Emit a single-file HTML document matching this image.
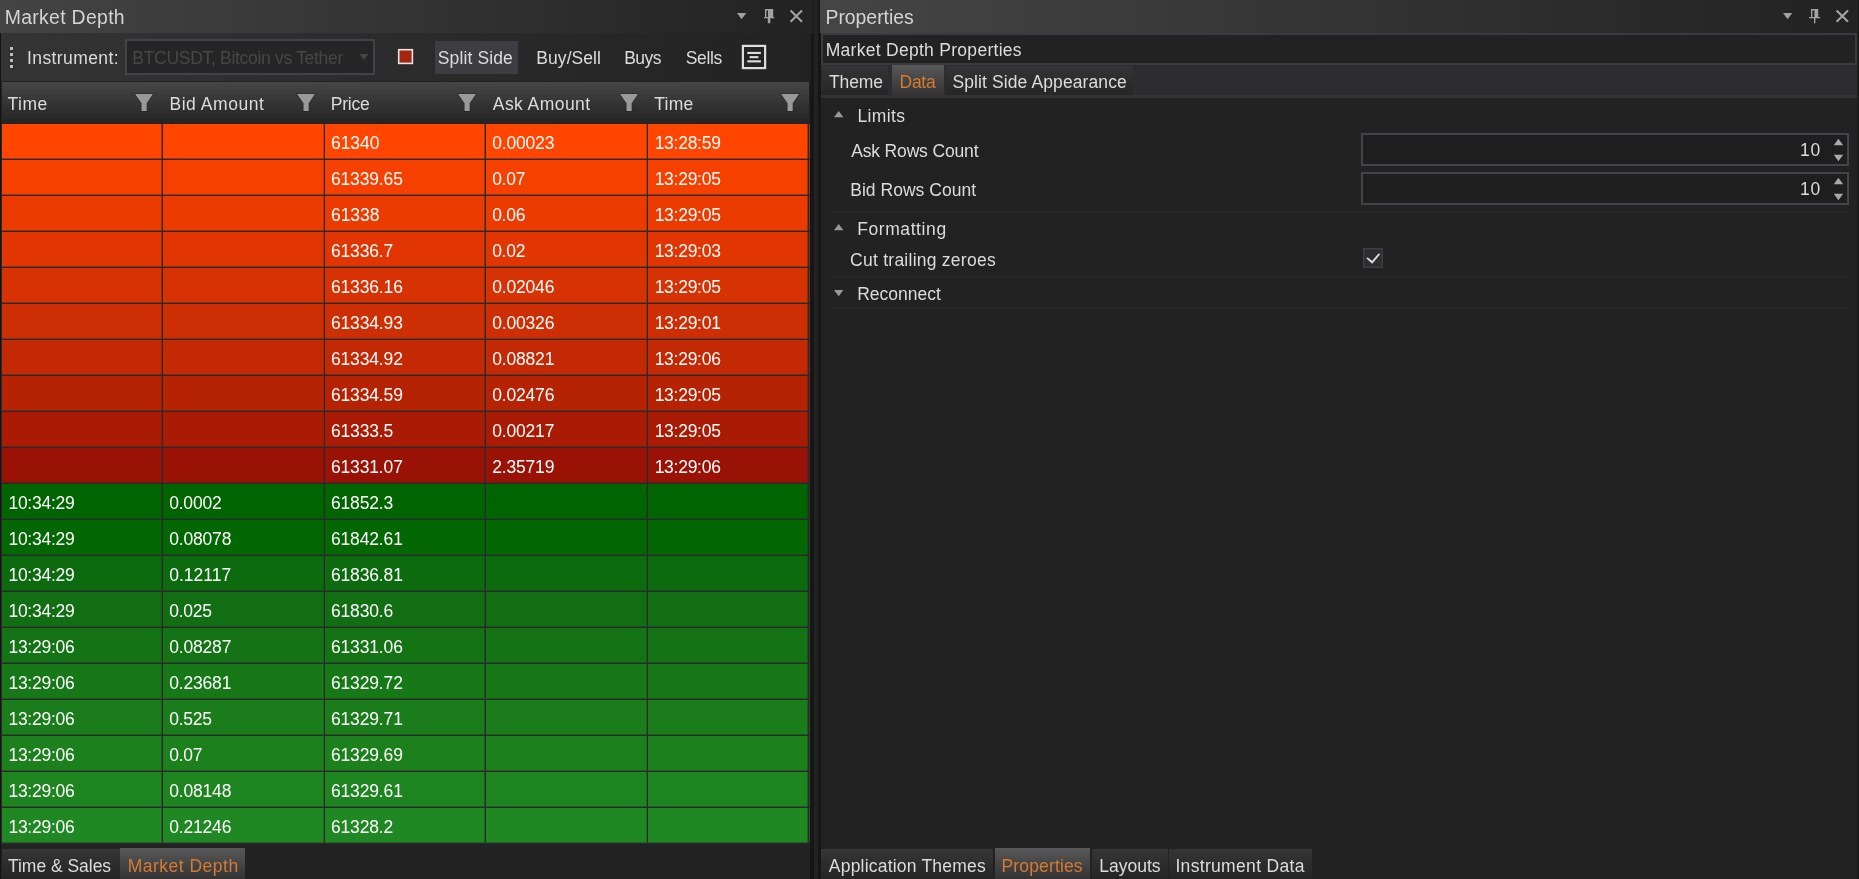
<!DOCTYPE html>
<html lang="en">
<head>
<meta charset="utf-8">
<title>Market Depth</title>
<style>
html,body{margin:0;padding:0;background:#222;}
body{width:1859px;height:879px;position:relative;overflow:hidden;font-family:"Liberation Sans",sans-serif;}
div,span,svg{position:absolute;box-sizing:border-box;}
.t{white-space:pre;line-height:1;font-size:17.5px;color:#dcdcdc;}
.c{color:#fff;}
/* left panel */
#ltitle{left:0;top:0;width:813px;height:33px;background:linear-gradient(90deg,#444 0%,#222 100%);}
#ltool{left:0;top:33px;width:812px;height:49px;background:linear-gradient(90deg,#343434 0%,#222 100%);}
#lborder{left:0;top:33px;width:1px;height:846px;background:#131313;}
#lhead{left:2px;top:82px;width:807px;height:42px;background:linear-gradient(180deg,#464646 0%,#363636 45%,#232323 100%);}
#lheadline{left:2px;top:81px;width:810px;height:1px;background:#222;}
#grid{left:1px;top:124px;width:809px;height:720px;background:#2a2a2a;}
.row{left:2px;width:808px;height:36px;
 background-image:
  linear-gradient(90deg,transparent 159px,rgba(42,42,42,.45) 159px,rgba(42,42,42,.45) 160px,#2a2a2a 160px,#2a2a2a 161px,transparent 161px,
   transparent 321px,rgba(42,42,42,.3) 321px,rgba(42,42,42,.3) 322px,#2a2a2a 322px,#2a2a2a 323px,transparent 323px,
   transparent 482px,rgba(42,42,42,.45) 482px,rgba(42,42,42,.45) 483px,#2a2a2a 483px,#2a2a2a 484px,transparent 484px,
   transparent 644px,rgba(42,42,42,.3) 644px,rgba(42,42,42,.3) 645px,#2a2a2a 645px,#2a2a2a 646px,transparent 646px,
   transparent 805px,rgba(42,42,42,.45) 805px,rgba(42,42,42,.45) 806px,#2a2a2a 806px,#2a2a2a 807px,rgba(42,42,42,.55) 807px),
  linear-gradient(180deg,transparent 34px,rgba(42,42,42,.45) 34px,rgba(42,42,42,.45) 35px,#2a2a2a 35px);}
#lbelow{left:1px;top:844px;width:810px;height:4px;background:#222;}
#lscroll{left:810px;top:82px;width:2px;height:766px;background:#1a1a1a;}
#ltabs{left:2px;top:848px;width:810px;height:31px;background:#222;}
.tab{background:linear-gradient(180deg,#363636,#242424);}
.tab2{background:linear-gradient(180deg,#343434,#262626);}
.tabsel{background:linear-gradient(180deg,#585858,#333);}
/* splitter */
#sp1{left:810px;top:82px;width:4px;height:797px;background:#161616;}
#sp1a{left:811px;top:33px;width:3px;height:49px;background:#161616;}
#sp1t{left:813px;top:0;width:1px;height:33px;background:#1c1c1c;}
#sp2{left:814px;top:0;width:4px;height:879px;background:#222;}
#sp3{left:818px;top:0;width:2px;height:33px;background:#191919;}
#sp3b{left:818px;top:33px;width:3px;height:846px;background:#161616;}
/* right panel */
#rtitle{left:820px;top:0;width:1038px;height:33px;background:linear-gradient(90deg,#454545 0%,#222 100%);}
#redge{left:1857px;top:33px;width:2px;height:846px;background:#1c1c1c;}
#redge2{left:1858px;top:0;width:1px;height:33px;background:#1c1c1c;}
#rbox{left:821px;top:33px;width:1036px;height:32px;border:2px solid #3a3a40;background:#222;}
#rstrip{left:821px;top:65px;width:1036px;height:33px;background:linear-gradient(180deg,#2d2d30 30px,#333336 30px);}
.sep{left:829px;width:1021px;height:2px;background:#262626;}
.spin{left:1361px;width:488px;height:33px;border:2px solid #434349;background:#1e1e1e;}
#chk{left:1363px;top:248px;width:20px;height:20px;border:1px solid #3d3d43;background:#2d2d30;box-shadow:inset 0 0 0 1px rgba(61,61,67,.5);}
.btn{background:#3e3e42;}
</style>
</head>
<body>
<!-- ===== left panel ===== -->
<div id="ltitle"></div>
<div id="ltool"></div>
<div id="lheadline"></div>
<div id="lhead"></div>
<div id="grid"></div>
<div class="row" style="top:124px;background-color:#ff4500"></div>
<div class="row" style="top:160px;background-color:#f54000"></div>
<div class="row" style="top:196px;background-color:#eb3b01"></div>
<div class="row" style="top:232px;background-color:#e13602"></div>
<div class="row" style="top:268px;background-color:#d73203"></div>
<div class="row" style="top:304px;background-color:#cd2e03"></div>
<div class="row" style="top:340px;background-color:#c22904"></div>
<div class="row" style="top:376px;background-color:#b62304"></div>
<div class="row" style="top:412px;background-color:#a91b04"></div>
<div class="row" style="top:448px;background-color:#9a1105"></div>
<div class="row" style="top:484px;background-color:#006400"></div>
<div class="row" style="top:520px;background-color:#036704"></div>
<div class="row" style="top:556px;background-color:#0d6b0f"></div>
<div class="row" style="top:592px;background-color:#116e13"></div>
<div class="row" style="top:628px;background-color:#137315"></div>
<div class="row" style="top:664px;background-color:#177818"></div>
<div class="row" style="top:700px;background-color:#1a7c1b"></div>
<div class="row" style="top:736px;background-color:#1c801d"></div>
<div class="row" style="top:772px;background-color:#1e8420"></div>
<div class="row" style="top:808px;background-color:#208823"></div>
<div id="lbelow"></div>
<div id="lscroll"></div>
<div id="ltabs"></div>
<div id="lborder"></div>
<div class="tab" style="left:2px;top:849px;width:118px;height:30px"></div>
<div class="tabsel" style="left:120px;top:848px;width:125px;height:31px"></div>

<!-- toolbar widgets -->
<svg style="left:8px;top:45px" width="8" height="26" viewBox="0 0 8 26"><g fill="#bdbdbd" stroke="#2a2a2a" stroke-width=".6" paint-order="stroke"><rect x="2" y="2" width="3" height="3"/><rect x="2" y="8" width="3" height="3"/><rect x="2" y="14" width="3" height="3"/><rect x="2" y="20" width="3" height="3"/></g></svg>
<div style="left:125px;top:39px;width:250px;height:36px;border:2px solid #434347;background:#252525"></div>
<svg style="left:357.6px;top:53px" width="12" height="9" viewBox="0 0 12 9"><path d="M1.3 1H10.3L5.8 7Z" fill="#45454c"/></svg>
<svg style="left:397px;top:48px" width="17" height="17" viewBox="0 0 17 17"><rect x="1.7" y="1.7" width="13.7" height="13.7" fill="#a5260e" stroke="#e4e4e4" stroke-width="1.6"/></svg>
<div class="btn" style="left:435px;top:41px;width:83px;height:33px"></div>
<svg style="left:741px;top:44px" width="26" height="26" viewBox="0 0 26 26"><rect x="1.9" y="1.9" width="22.2" height="22.2" fill="none" stroke="#dedede" stroke-width="2.2"/><g fill="#dedede"><rect x="6.3" y="7.9" width="13.6" height="2.1"/><rect x="8.6" y="12.1" width="8.8" height="2.1"/><rect x="6.3" y="16.3" width="13.6" height="2.1"/></g></svg>
<!-- title bar icons (left) -->
<svg style="left:735px;top:8px" width="70" height="18" viewBox="0 0 70 18"><g fill="#a2a2a2" stroke="none"><path d="M2 5H11.2L6.6 11.2Z"/><path d="M30 1H38.2V8.9H39.2V10.2H35.3V15.2H32.8V10.2H29V8.9H30ZM31.4 2.5V8.9H33V2.5Z" fill-rule="evenodd"/></g><path d="M55.6 2.4L67 13.8M67 2.4L55.6 13.8" stroke="#a2a2a2" stroke-width="2.1" fill="none"/></svg>
<svg class="fn" style="left:132.7px;top:92px" width="22" height="22" viewBox="-2 -2 22 22"><path d="M0 0H18L11.7 9.2V17H6.5V9.2Z" fill="#999" stroke="#252525" stroke-width="1.2" paint-order="stroke"/></svg>
<svg class="fn" style="left:294.7px;top:92px" width="22" height="22" viewBox="-2 -2 22 22"><path d="M0 0H18L11.7 9.2V17H6.5V9.2Z" fill="#999" stroke="#252525" stroke-width="1.2" paint-order="stroke"/></svg>
<svg class="fn" style="left:455.7px;top:92px" width="22" height="22" viewBox="-2 -2 22 22"><path d="M0 0H18L11.7 9.2V17H6.5V9.2Z" fill="#999" stroke="#252525" stroke-width="1.2" paint-order="stroke"/></svg>
<svg class="fn" style="left:617.7px;top:92px" width="22" height="22" viewBox="-2 -2 22 22"><path d="M0 0H18L11.7 9.2V17H6.5V9.2Z" fill="#999" stroke="#252525" stroke-width="1.2" paint-order="stroke"/></svg>
<svg class="fn" style="left:778.7px;top:92px" width="22" height="22" viewBox="-2 -2 22 22"><path d="M0 0H18L11.7 9.2V17H6.5V9.2Z" fill="#999" stroke="#252525" stroke-width="1.2" paint-order="stroke"/></svg>

<!-- ===== splitter ===== -->
<div id="sp2"></div>
<div id="sp1"></div><div id="sp1a"></div><div id="sp1t"></div>
<div id="sp3"></div><div id="sp3b"></div>

<!-- ===== right panel ===== -->
<div id="rtitle"></div>
<div id="redge"></div><div id="redge2"></div>
<div id="rstrip"></div>
<div id="rbox"></div>
<div class="tab2" style="left:822px;top:66px;width:66px;height:29px"></div>
<div class="tabsel" style="left:892px;top:65px;width:52px;height:30px"></div>
<div class="tab2" style="left:946px;top:66px;width:187px;height:29px"></div>
<!-- title bar icons (right) -->
<svg style="left:1781px;top:8px" width="70" height="18" viewBox="0 0 70 18"><g fill="#a2a2a2" stroke="none"><path d="M2 5H11.2L6.6 11.2Z"/><path d="M30 1H37.2V8.9H39.2V10.3H34.4V15.3H33V10.3H28.1V8.9H30ZM31.3 2.5V8.9H33.4V2.5Z" fill-rule="evenodd"/></g><path d="M55.6 2.4L67 13.8M67 2.4L55.6 13.8" stroke="#a2a2a2" stroke-width="2.1" fill="none"/></svg>
<!-- property grid -->
<svg style="left:833px;top:110px" width="12" height="8" viewBox="0 0 12 8"><path d="M1 7.2H10.4L5.7 1Z" fill="#999"/></svg>
<svg style="left:833px;top:223px" width="12" height="8" viewBox="0 0 12 8"><path d="M1 7.2H10.4L5.7 1Z" fill="#999"/></svg>
<svg style="left:833px;top:289px" width="12" height="8" viewBox="0 0 12 8"><path d="M1 1H10.4L5.7 7.2Z" fill="#999"/></svg>
<div class="spin" style="top:133px"></div>
<div class="spin" style="top:172px"></div>
<svg style="left:1832px;top:138px" width="14" height="24" viewBox="0 0 14 24"><g fill="#a8a8a8"><path d="M1.8 7.3H11.2L6.4 .8Z"/><path d="M1.8 16.8H11.2L6.4 23.3Z"/></g></svg>
<svg style="left:1832px;top:177px" width="14" height="24" viewBox="0 0 14 24"><g fill="#a8a8a8"><path d="M1.8 7.3H11.2L6.4 .8Z"/><path d="M1.8 16.8H11.2L6.4 23.3Z"/></g></svg>
<div class="sep" style="top:211px"></div>
<div class="sep" style="top:276px"></div>
<div class="sep" style="top:307px"></div>
<div id="chk"></div>
<svg style="left:1363px;top:248px" width="20" height="20" viewBox="0 0 20 20"><path d="M4.6 10.4L9.1 14.3L15.9 6.4" stroke="#dedede" stroke-width="1.9" stroke-linecap="round" fill="none"/></svg>
<!-- bottom tabs right -->
<div class="tab" style="left:821px;top:849px;width:172px;height:30px"></div>
<div class="tabsel" style="left:995px;top:848px;width:95px;height:31px"></div>
<div class="tab" style="left:1092px;top:849px;width:76px;height:30px"></div>
<div class="tab" style="left:1169px;top:849px;width:143px;height:30px"></div>

<!-- ===== text ===== -->
<div id="txt" style="left:0;top:0;width:1859px;height:879px;will-change:transform">
<span class="t" style="left:4.71px;top:7.60px;font-size:19.4px;letter-spacing:0.322px;color:#d4d4d4">Market Depth</span>
<span class="t" style="left:26.99px;top:49.55px;font-size:17.5px;letter-spacing:0.407px;color:#dcdcdc">Instrument:</span>
<span class="t" style="left:132.36px;top:49.55px;font-size:17.5px;letter-spacing:-0.303px;color:#474747">BTCUSDT, Bitcoin vs Tether</span>
<span class="t" style="left:437.81px;top:49.55px;font-size:17.5px;letter-spacing:0.115px;color:#dcdcdc">Split Side</span>
<span class="t" style="left:536.36px;top:49.55px;font-size:17.5px;letter-spacing:0.043px;color:#dcdcdc">Buy/Sell</span>
<span class="t" style="left:624.16px;top:49.55px;font-size:17.5px;letter-spacing:-0.479px;color:#dcdcdc">Buys</span>
<span class="t" style="left:685.71px;top:49.55px;font-size:17.5px;letter-spacing:-0.353px;color:#dcdcdc">Sells</span>
<span class="t" style="left:7.61px;top:95.55px;font-size:17.5px;letter-spacing:0.440px;color:#dcdcdc">Time</span>
<span class="t" style="left:169.46px;top:95.55px;font-size:17.5px;letter-spacing:0.552px;color:#dcdcdc">Bid Amount</span>
<span class="t" style="left:330.66px;top:95.55px;font-size:17.5px;letter-spacing:-0.190px;color:#dcdcdc">Price</span>
<span class="t" style="left:492.77px;top:95.55px;font-size:17.5px;letter-spacing:0.441px;color:#dcdcdc">Ask Amount</span>
<span class="t" style="left:654.31px;top:95.55px;font-size:17.5px;letter-spacing:0.240px;color:#dcdcdc">Time</span>
<span class="t" style="left:825.51px;top:7.60px;font-size:19.4px;letter-spacing:-0.022px;color:#d4d4d4">Properties</span>
<span class="t" style="left:825.66px;top:41.55px;font-size:17.5px;letter-spacing:0.286px;color:#dcdcdc">Market Depth Properties</span>
<span class="t" style="left:828.91px;top:73.55px;font-size:17.5px;letter-spacing:-0.100px;color:#dcdcdc">Theme</span>
<span class="t" style="left:899.56px;top:73.55px;font-size:17.5px;letter-spacing:-0.278px;color:#d67a32">Data</span>
<span class="t" style="left:952.51px;top:73.55px;font-size:17.5px;letter-spacing:0.103px;color:#dcdcdc">Split Side Appearance</span>
<span class="t" style="left:857.46px;top:107.55px;font-size:17.5px;letter-spacing:0.373px;color:#dcdcdc">Limits</span>
<span class="t" style="left:851.17px;top:142.55px;font-size:17.5px;letter-spacing:-0.154px;color:#dcdcdc">Ask Rows Count</span>
<span class="t" style="left:850.26px;top:181.55px;font-size:17.5px;letter-spacing:0.029px;color:#dcdcdc">Bid Rows Count</span>
<span class="t" style="left:857.16px;top:220.55px;font-size:17.5px;letter-spacing:0.591px;color:#dcdcdc">Formatting</span>
<span class="t" style="left:850.11px;top:251.55px;font-size:17.5px;letter-spacing:0.249px;color:#dcdcdc">Cut trailing zeroes</span>
<span class="t" style="left:857.16px;top:285.55px;font-size:17.5px;letter-spacing:-0.001px;color:#dcdcdc">Reconnect</span>
<span class="t" style="left:1800.07px;top:142.05px;font-size:17.5px;letter-spacing:0.748px;color:#dcdcdc">10</span>
<span class="t" style="left:1800.07px;top:181.05px;font-size:17.5px;letter-spacing:0.748px;color:#dcdcdc">10</span>
<span class="t" style="left:8.01px;top:857.55px;font-size:17.5px;letter-spacing:-0.027px;color:#dcdcdc">Time &amp; Sales</span>
<span class="t" style="left:127.66px;top:857.55px;font-size:17.5px;letter-spacing:0.493px;color:#d67a32">Market Depth</span>
<span class="t" style="left:828.87px;top:857.55px;font-size:17.5px;letter-spacing:0.205px;color:#dcdcdc">Application Themes</span>
<span class="t" style="left:1001.46px;top:857.55px;font-size:17.5px;letter-spacing:0.156px;color:#d67a32">Properties</span>
<span class="t" style="left:1099.16px;top:857.55px;font-size:17.5px;letter-spacing:0.028px;color:#dcdcdc">Layouts</span>
<span class="t" style="left:1175.39px;top:857.55px;font-size:17.5px;letter-spacing:0.330px;color:#dcdcdc">Instrument Data</span>
<span class="t c" style="left:330.95px;top:134.55px;letter-spacing:-0.034px">61340</span>
<span class="t c" style="left:492.15px;top:134.55px;letter-spacing:-0.167px">0.00023</span>
<span class="t c" style="left:654.65px;top:134.55px;letter-spacing:-0.266px">13:28:59</span>
<span class="t c" style="left:330.95px;top:170.55px;letter-spacing:-0.150px">61339.65</span>
<span class="t c" style="left:492.15px;top:170.55px;letter-spacing:-0.266px">0.07</span>
<span class="t c" style="left:654.65px;top:170.55px;letter-spacing:-0.266px">13:29:05</span>
<span class="t c" style="left:330.95px;top:206.55px;letter-spacing:-0.034px">61338</span>
<span class="t c" style="left:492.15px;top:206.55px;letter-spacing:-0.266px">0.06</span>
<span class="t c" style="left:654.65px;top:206.55px;letter-spacing:-0.266px">13:29:05</span>
<span class="t c" style="left:330.95px;top:242.55px;letter-spacing:-0.167px">61336.7</span>
<span class="t c" style="left:492.15px;top:242.55px;letter-spacing:-0.266px">0.02</span>
<span class="t c" style="left:654.65px;top:242.55px;letter-spacing:-0.266px">13:29:03</span>
<span class="t c" style="left:330.95px;top:278.55px;letter-spacing:-0.150px">61336.16</span>
<span class="t c" style="left:492.15px;top:278.55px;letter-spacing:-0.167px">0.02046</span>
<span class="t c" style="left:654.65px;top:278.55px;letter-spacing:-0.266px">13:29:05</span>
<span class="t c" style="left:330.95px;top:314.55px;letter-spacing:-0.150px">61334.93</span>
<span class="t c" style="left:492.15px;top:314.55px;letter-spacing:-0.167px">0.00326</span>
<span class="t c" style="left:654.65px;top:314.55px;letter-spacing:-0.266px">13:29:01</span>
<span class="t c" style="left:330.95px;top:350.55px;letter-spacing:-0.150px">61334.92</span>
<span class="t c" style="left:492.15px;top:350.55px;letter-spacing:-0.167px">0.08821</span>
<span class="t c" style="left:654.65px;top:350.55px;letter-spacing:-0.266px">13:29:06</span>
<span class="t c" style="left:330.95px;top:386.55px;letter-spacing:-0.150px">61334.59</span>
<span class="t c" style="left:492.15px;top:386.55px;letter-spacing:-0.167px">0.02476</span>
<span class="t c" style="left:654.65px;top:386.55px;letter-spacing:-0.266px">13:29:05</span>
<span class="t c" style="left:330.95px;top:422.55px;letter-spacing:-0.167px">61333.5</span>
<span class="t c" style="left:492.15px;top:422.55px;letter-spacing:-0.167px">0.00217</span>
<span class="t c" style="left:654.65px;top:422.55px;letter-spacing:-0.266px">13:29:05</span>
<span class="t c" style="left:330.95px;top:458.55px;letter-spacing:-0.150px">61331.07</span>
<span class="t c" style="left:492.15px;top:458.55px;letter-spacing:-0.167px">2.35719</span>
<span class="t c" style="left:654.65px;top:458.55px;letter-spacing:-0.266px">13:29:06</span>
<span class="t c" style="left:8.45px;top:494.55px;letter-spacing:-0.266px">10:34:29</span>
<span class="t c" style="left:169.15px;top:494.55px;letter-spacing:-0.189px">0.0002</span>
<span class="t c" style="left:330.95px;top:494.55px;letter-spacing:-0.167px">61852.3</span>
<span class="t c" style="left:8.45px;top:530.55px;letter-spacing:-0.266px">10:34:29</span>
<span class="t c" style="left:169.15px;top:530.55px;letter-spacing:-0.167px">0.08078</span>
<span class="t c" style="left:330.95px;top:530.55px;letter-spacing:-0.150px">61842.61</span>
<span class="t c" style="left:8.45px;top:566.55px;letter-spacing:-0.266px">10:34:29</span>
<span class="t c" style="left:169.15px;top:566.55px;letter-spacing:0.019px">0.12117</span>
<span class="t c" style="left:330.95px;top:566.55px;letter-spacing:-0.150px">61836.81</span>
<span class="t c" style="left:8.45px;top:602.55px;letter-spacing:-0.266px">10:34:29</span>
<span class="t c" style="left:169.15px;top:602.55px;letter-spacing:-0.219px">0.025</span>
<span class="t c" style="left:330.95px;top:602.55px;letter-spacing:-0.167px">61830.6</span>
<span class="t c" style="left:8.45px;top:638.55px;letter-spacing:-0.266px">13:29:06</span>
<span class="t c" style="left:169.15px;top:638.55px;letter-spacing:-0.167px">0.08287</span>
<span class="t c" style="left:330.95px;top:638.55px;letter-spacing:-0.150px">61331.06</span>
<span class="t c" style="left:8.45px;top:674.55px;letter-spacing:-0.266px">13:29:06</span>
<span class="t c" style="left:169.15px;top:674.55px;letter-spacing:-0.167px">0.23681</span>
<span class="t c" style="left:330.95px;top:674.55px;letter-spacing:-0.150px">61329.72</span>
<span class="t c" style="left:8.45px;top:710.55px;letter-spacing:-0.266px">13:29:06</span>
<span class="t c" style="left:169.15px;top:710.55px;letter-spacing:-0.219px">0.525</span>
<span class="t c" style="left:330.95px;top:710.55px;letter-spacing:-0.150px">61329.71</span>
<span class="t c" style="left:8.45px;top:746.55px;letter-spacing:-0.266px">13:29:06</span>
<span class="t c" style="left:169.15px;top:746.55px;letter-spacing:-0.266px">0.07</span>
<span class="t c" style="left:330.95px;top:746.55px;letter-spacing:-0.150px">61329.69</span>
<span class="t c" style="left:8.45px;top:782.55px;letter-spacing:-0.266px">13:29:06</span>
<span class="t c" style="left:169.15px;top:782.55px;letter-spacing:-0.167px">0.08148</span>
<span class="t c" style="left:330.95px;top:782.55px;letter-spacing:-0.150px">61329.61</span>
<span class="t c" style="left:8.45px;top:818.55px;letter-spacing:-0.266px">13:29:06</span>
<span class="t c" style="left:169.15px;top:818.55px;letter-spacing:-0.167px">0.21246</span>
<span class="t c" style="left:330.95px;top:818.55px;letter-spacing:-0.167px">61328.2</span>
</div>
</body>
</html>
